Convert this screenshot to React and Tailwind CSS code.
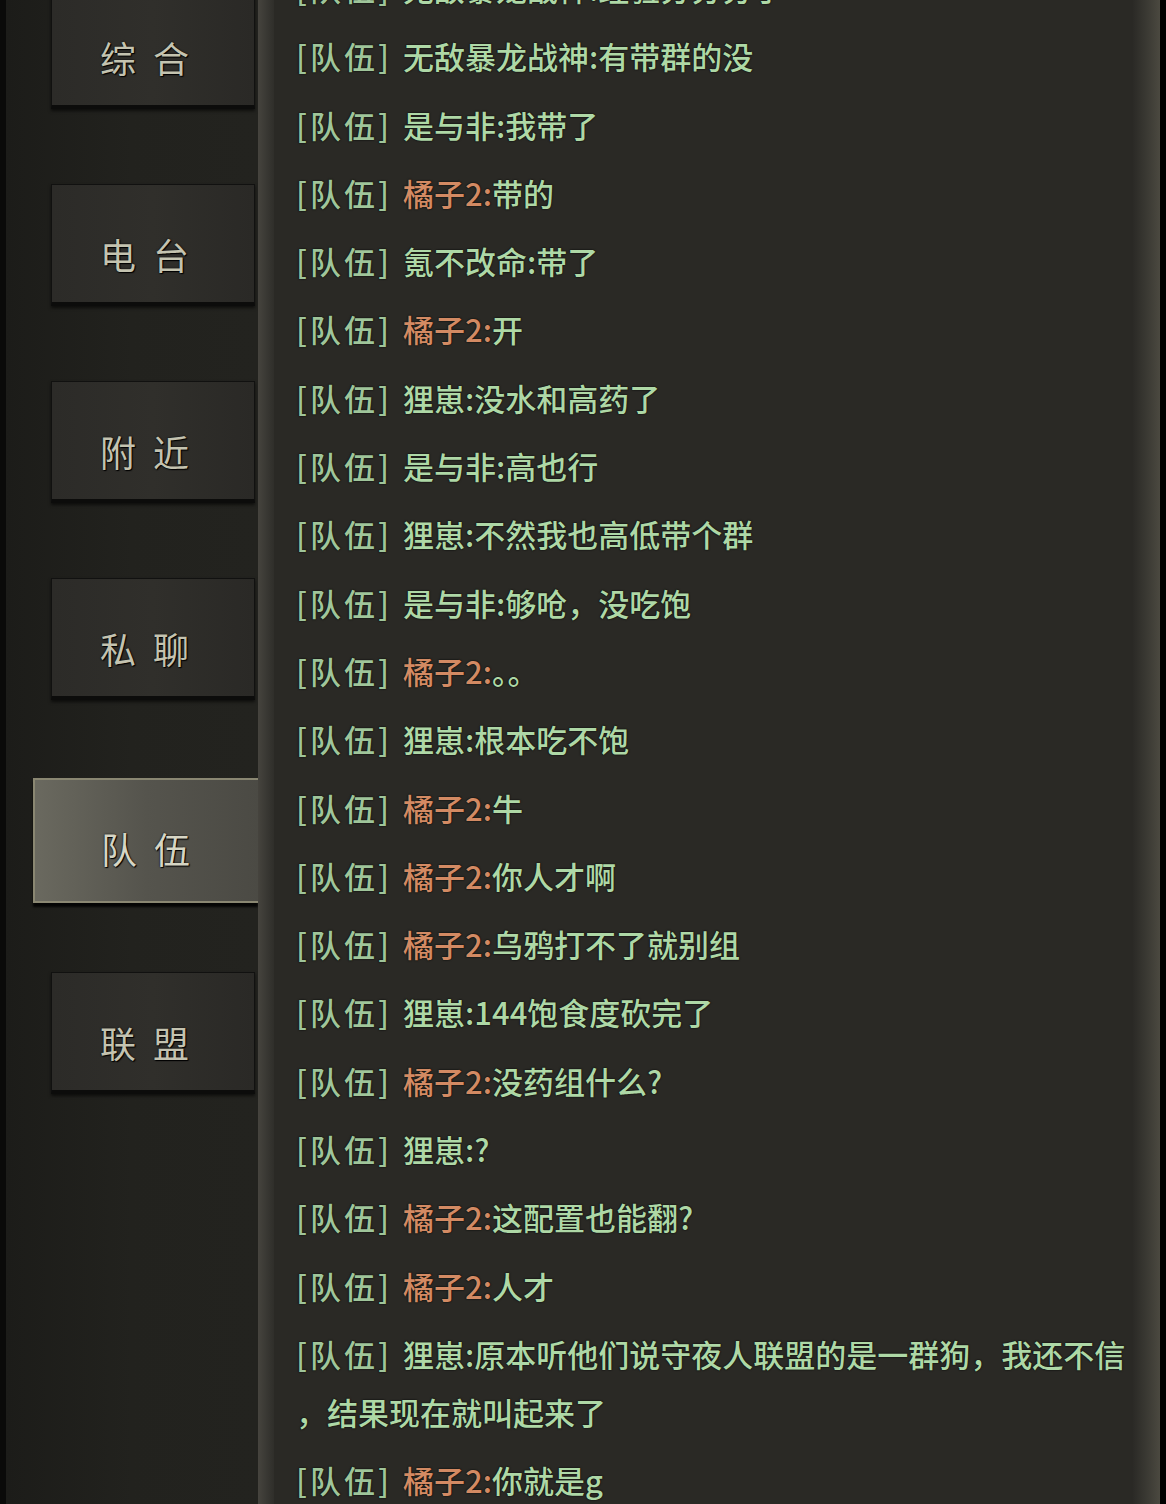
import React from 'react';

const tabs = [
  { label: '综合' },
  { label: '电台' },
  { label: '附近' },
  { label: '私聊' },
  { label: '队伍', active: true },
  { label: '联盟' },
];

// name color: g = green, o = orange
const messages = [
  { name: '无敌暴龙战神', c: 'g', text: '经验分分分了' },
  { name: '无敌暴龙战神', c: 'g', text: '有带群的没' },
  { name: '是与非', c: 'g', text: '我带了' },
  { name: '橘子2', c: 'o', text: '带的' },
  { name: '氪不改命', c: 'g', text: '带了' },
  { name: '橘子2', c: 'o', text: '开' },
  { name: '狸崽', c: 'g', text: '没水和高药了' },
  { name: '是与非', c: 'g', text: '高也行' },
  { name: '狸崽', c: 'g', text: '不然我也高低带个群' },
  { name: '是与非', c: 'g', text: '够呛，没吃饱' },
  { name: '橘子2', c: 'o', text: '。。' },
  { name: '狸崽', c: 'g', text: '根本吃不饱' },
  { name: '橘子2', c: 'o', text: '牛' },
  { name: '橘子2', c: 'o', text: '你人才啊' },
  { name: '橘子2', c: 'o', text: '乌鸦打不了就别组' },
  { name: '狸崽', c: 'g', text: '144饱食度砍完了' },
  { name: '橘子2', c: 'o', text: '没药组什么?' },
  { name: '狸崽', c: 'g', text: '?' },
  { name: '橘子2', c: 'o', text: '这配置也能翻?' },
  { name: '橘子2', c: 'o', text: '人才' },
  { name: '狸崽', c: 'g', text: '原本听他们说守夜人联盟的是一群狗，我还不信', wrap: '，结果现在就叫起来了' },
  { name: '橘子2', c: 'o', text: '你就是g' },
];

function Tab({ label, active }) {
  if (active) {
    return (
      <div className="ml-[27px] mt-[3px] -mb-[6px] h-[125px] flex items-center pl-[66px] pt-[14px] border-2 border-r-0 border-[#8a8772] bg-gradient-to-r from-[#6a695f] via-[#55544d] to-[#4b4a44] shadow-[0_4px_2px_rgba(0,0,0,0.85)]">
        <span className="text-[36px] tracking-[17px] text-[#d6d5c4] [text-shadow:0_0_2px_#000,1px_1px_1px_#000]">{label}</span>
      </div>
    );
  }
  return (
    <div className="ml-[45px] mr-[3px] h-[122px] flex items-center pl-[48px] pt-[20px] bg-gradient-to-r from-[#2c2b28] via-[#302f2b] to-[#2a2926] border border-[#111110] border-b-[4px] border-b-[#0c0c0b] shadow-[0_2px_3px_rgba(0,0,0,0.6)]">
      <span className="text-[36px] tracking-[17px] text-[#c4c3b0] [text-shadow:0_0_2px_#000,1px_1px_1px_#000]">{label}</span>
    </div>
  );
}

function Message({ m }) {
  const nameColor = m.c === 'o' ? 'text-[#d38a63]' : 'text-[#aed8a6]';
  return (
    <div className="leading-[58px] whitespace-nowrap">
      <div>
        <span className="text-[#9fc59a] tracking-[3px]">[队伍]</span>
        <span className="inline-block w-[11px]" />
        <span className={nameColor}>{m.name}:</span>
        <span className="text-[#aed8a6]">{m.text}</span>
      </div>
      {m.wrap && <div className="text-[#aed8a6]">{m.wrap}</div>}
    </div>
  );
}

export default function App() {
  return (
    <div
      className="w-[1166px] h-[1504px] overflow-hidden flex bg-black"
      style={{ fontFamily: '"Noto Sans CJK SC", "Noto Sans", sans-serif' }}
    >
      <div className="w-[6px] shrink-0 bg-[#0a0a09]" />
      <div className="w-[252px] shrink-0 bg-gradient-to-r from-[#1c1c19] via-[#22221e] to-[#23231f] flex flex-col gap-[75px] -mt-[13px]">
        {tabs.map((t) => (
          <Tab key={t.label} {...t} />
        ))}
      </div>
      <div className="w-[16px] shrink-0 bg-gradient-to-r from-[#46443e] via-[#3a3934] to-[#2f2e2a]" />
      <div className="flex-1 bg-[#2a2925] flex">
        <div className="flex-1 pl-[22px] -mt-[41px] flex flex-col gap-[10.3px] text-[31px] font-medium [text-shadow:0_0_2px_#0b0d0a,0_0_1px_#000]">
          {messages.map((m, i) => (
            <Message key={i} m={m} />
          ))}
        </div>
        <div className="w-[27px] shrink-0 bg-gradient-to-r from-[#2b2a26] via-[#3a3933] to-[#4b4940]" />
      </div>
      <div className="w-[6px] shrink-0 bg-black" />
    </div>
  );
}
